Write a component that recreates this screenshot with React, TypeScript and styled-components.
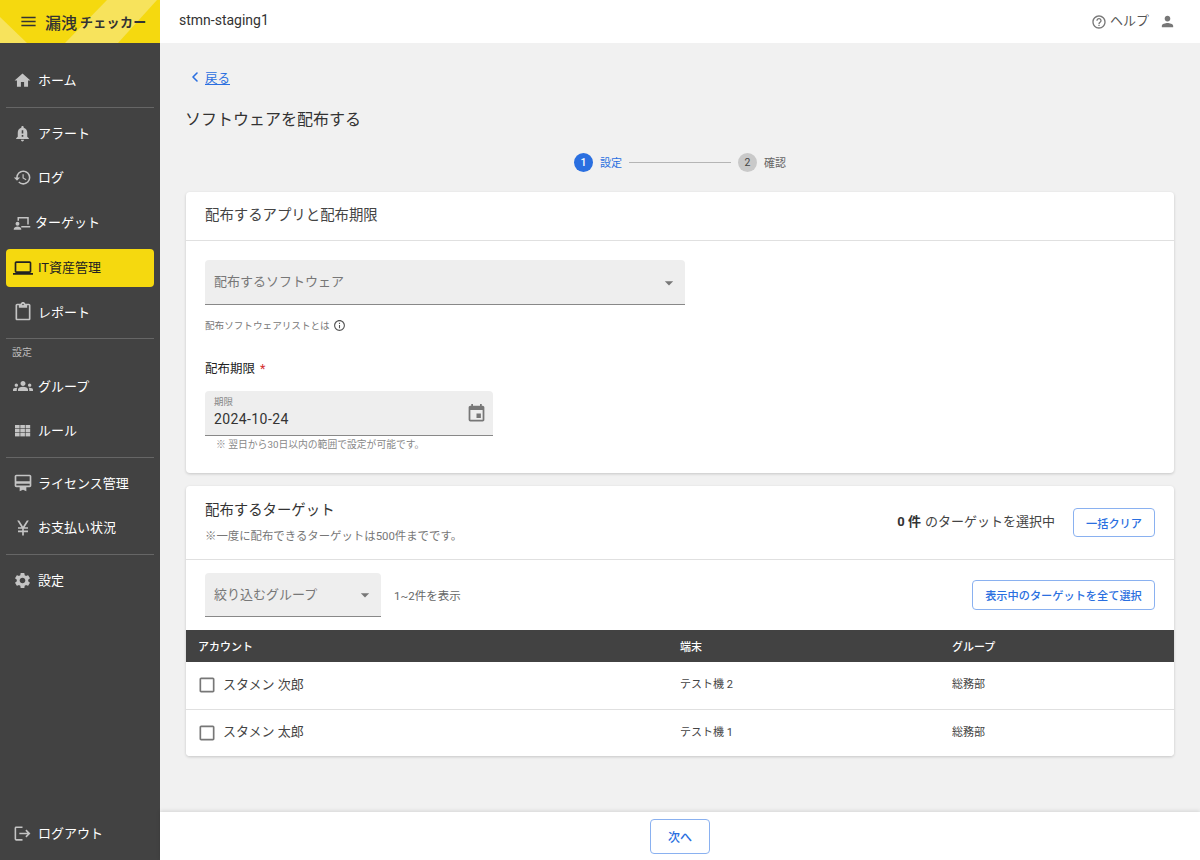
import React from "react";
import styled, { createGlobalStyle } from "styled-components";
import { ChevronLeft } from "lucide-react";
import {
  MdHome, MdNotificationImportant, MdRestore, MdLaptop, MdOutlineContentPaste, MdGroups,
  MdOutlineCardMembership, MdCurrencyYen, MdSettings, MdLogout, MdMenu, MdOutlineHelpOutline, MdPerson,
  MdArrowDropDown, MdOutlineInfo, MdEvent, MdCheckBoxOutlineBlank,
} from "react-icons/md";

const Global = createGlobalStyle`
  html, body { margin: 0; padding: 0; height: 100%; }
  body { font-family: Roboto, "Noto Sans CJK JP", sans-serif; color: #333; background: #f1f1f1; }
  * { box-sizing: border-box; }
`;

const Shell = styled.div`
  display: flex;
  width: 1200px;
  height: 860px;
  overflow: hidden;
`;
const Side = styled.aside`
  width: 160px;
  flex: none;
  display: flex;
  flex-direction: column;
  background: #424242;
`;
const Logo = styled.div`
  height: 43px;
  flex: none;
  display: flex;
  align-items: center;
  gap: 7px;
  padding-left: 19px;
  color: #333;
  background: #f5d90f;
  position: relative;
  overflow: hidden;
  & > * { position: relative; }
`;
const LogoArt = styled.svg`
  position: absolute !important;
  inset: 0;
  width: 160px;
  height: 43px;
`;
const LogoName = styled.span`
  display: flex;
  align-items: center;
  gap: 3px;
  font-weight: 700;
`;
const LogoKanji = styled.span`
  font-size: 16px;
  font-weight: 500;
`;
const LogoKana = styled.span`
  font-size: 13px;
  letter-spacing: 0.3px;
`;
const NavScroll = styled.nav`
  flex: 1;
  display: flex;
  flex-direction: column;
  padding: 15.5px 6px 4.5px;
`;
const Item = styled.div<{ $active?: boolean }>`
  height: 38px;
  margin: 3.4px 0;
  display: flex;
  align-items: center;
  gap: 6px;
  padding: 0 0 2px 7px;
  border-radius: 4px;
  font-size: 13px;
  color: ${(p) => (p.$active ? "#222" : "#fff")};
  background: ${(p) => (p.$active ? "#f5d90f" : "transparent")};
  svg { flex: none; color: ${(p) => (p.$active ? "#222" : "#c4c4c4")}; }
`;
const IconSlot = styled.span`
  width: 19px;
  flex: none;
  display: flex;
  justify-content: center;
  margin-top: 2px;
`;
const TargetSvg = styled.svg`
  margin: 2px -2px 0 0;
`;
const Divider = styled.hr`
  width: 100%;
  border: 0;
  border-top: 1px solid #666;
  margin: 3.5px 0 3px;
`;
const Section = styled.div`
  font-size: 10px;
  line-height: 12px;
  color: #bdbdbd;
  padding-left: 6px;
  margin-top: 5px;
  margin-bottom: 4.5px;
`;
const Spacer = styled.div`
  flex: 1;
`;
const Main = styled.div`
  flex: 1;
  min-width: 0;
  display: flex;
  flex-direction: column;
`;
const Top = styled.header`
  height: 43px;
  flex: none;
  background: #fff;
  display: flex;
  align-items: center;
  justify-content: space-between;
  padding: 0 24px 3px 19px;
  font-size: 14px;
`;
const Help = styled.div`
  display: flex;
  align-items: center;
  gap: 3px;
  color: #555;
  font-size: 13px;
  padding-bottom: 2px;
  svg { color: #777; margin-top: 5px; }
`;
const UserBtn = styled.span`
  display: flex;
  margin-left: 7px;
`;
const Content = styled.main`
  flex: 1;
  min-height: 0;
  padding: 25px 26px 0;
  display: flex;
  flex-direction: column;
`;
const Back = styled.a`
  display: flex;
  align-items: center;
  color: #2a6fe0;
  font-size: 12.5px;
  height: 18px;
  padding-left: 1px;
  span { text-decoration: underline; margin-left: 2px; }
`;
const Title = styled.h1`
  font-size: 16px;
  font-weight: 400;
  margin: 22px 0 0 -1px;
  line-height: 24px;
  color: #333;
`;
const Stepper = styled.div`
  display: flex;
  align-items: center;
  justify-content: center;
  height: 20px;
  margin: 20px 0 20px;
  font-size: 11px;
`;
const StepDot = styled.span<{ $on?: boolean }>`
  width: 19px;
  height: 19px;
  border-radius: 50%;
  display: flex;
  align-items: center;
  justify-content: center;
  font-size: 10.5px;
  font-weight: ${(p) => (p.$on ? 500 : 400)};
  background: ${(p) => (p.$on ? "#2a6fe0" : "#c9c9c9")};
  color: ${(p) => (p.$on ? "#fff" : "#444")};
`;
const StepLabel = styled.span<{ $on?: boolean }>`
  margin-left: 7px;
  color: ${(p) => (p.$on ? "#2a6fe0" : "#666")};
`;
const StepLine = styled.span`
  width: 102px;
  height: 1px;
  background: #b5b5b5;
  margin: 0 7px;
`;
const Card = styled.section`
  background: #fff;
  border-radius: 4px;
  box-shadow: 0 1px 3px rgba(0, 0, 0, 0.18);
  margin-bottom: 13px;
`;
const CardHead = styled.div`
  height: 49px;
  display: flex;
  align-items: center;
  padding: 0 19px 5px;
  font-size: 14.4px;
  color: #444;
  border-bottom: 1px solid #e0e0e0;
`;
const CardBody = styled.div`
  padding: 19px 19px 22px;
`;
const Filled = styled.div<{ $w: number; $h: number }>`
  width: ${(p) => p.$w}px;
  height: ${(p) => p.$h}px;
  background: #eee;
  border-bottom: 1px solid #888;
  border-radius: 4px 4px 0 0;
  display: flex;
  align-items: center;
  justify-content: space-between;
  padding: 0 6px 3px 9px;
  font-size: 13px;
  color: #777;
  svg { color: #777; flex: none; margin-top: 4px; }
`;
const Hint = styled.div`
  display: flex;
  align-items: center;
  gap: 3px;
  font-size: 9.6px;
  line-height: 12px;
  color: #777;
  margin-top: 14px;
  svg { color: #555; }
`;
const Label = styled.div`
  font-size: 12.5px;
  line-height: 16px;
  color: #222;
  margin-top: 29px;
  margin-bottom: 14px;
  b { font-weight: 400; color: #d32f2f; margin-left: 2px; }
`;
const DateText = styled.div`
  display: flex;
  flex-direction: column;
  small { font-size: 9.5px; color: #888; line-height: 12px; margin-bottom: 3px; }
  span { font-size: 14px; line-height: 16px; color: #333; letter-spacing: 0.4px; }
`;
const Note = styled.div`
  font-size: 9.8px;
  line-height: 12px;
  color: #888;
  margin: 3px 0 0 11px;
`;
const TargetHead = styled.div`
  height: 74px;
  display: flex;
  align-items: center;
  justify-content: space-between;
  padding: 0 19px 2px;
  border-bottom: 1px solid #e0e0e0;
`;
const TargetTitle = styled.div`
  font-size: 14.4px;
  line-height: 20px;
  color: #333;
`;
const TargetSub = styled.div`
  font-size: 11.4px;
  line-height: 14px;
  color: #777;
  margin-top: 8px;
`;
const Count = styled.div`
  display: flex;
  align-items: center;
  font-size: 13px;
  color: #444;
  gap: 18px;
  margin-top: 2px;
  b { font-weight: 700; color: #333; margin-right: 4px; }
  span { padding-bottom: 5px; }
`;
const OutlineBtn = styled.button<{ $w?: number; $h?: number; $fs?: number }>`
  width: ${(p) => p.$w ?? 82}px;
  height: ${(p) => p.$h ?? 29}px;
  background: #fff;
  border: 1px solid #8ab1f0;
  border-radius: 4px;
  color: #2a6fe0;
  font: 500 ${(p) => p.$fs ?? 11.2}px Roboto, "Noto Sans CJK JP", sans-serif;
  padding: 0;
`;
const Filter = styled.div`
  height: 70px;
  padding: 13px 19px 0;
  display: flex;
  align-items: flex-start;
`;
const Shown = styled.div`
  height: 44px;
  display: flex;
  align-items: center;
  margin-left: 13px;
  font-size: 11.5px;
  color: #666;
`;
const FilterRight = styled.div`
  margin-left: auto;
  margin-top: 7px;
`;
const Row = styled.div<{ $head?: boolean }>`
  display: grid;
  grid-template-columns: 482px 272px 1fr;
  align-items: center;
  padding: 0 0 ${(p) => (p.$head ? 0 : 5)}px 12px;
  height: ${(p) => (p.$head ? 32 : 48)}px;
  background: ${(p) => (p.$head ? "#424242" : "#fff")};
  color: ${(p) => (p.$head ? "#fff" : "#444")};
  font-size: 11px;
  font-weight: ${(p) => (p.$head ? 500 : 400)};
  border-bottom: ${(p) => (p.$head ? "0" : "1px solid #e0e0e0")};
  &:last-child { border-bottom: 0; border-radius: 0 0 4px 4px; height: 46px; }
`;
const Account = styled.div`
  display: flex;
  align-items: center;
  gap: 6px;
  font-size: 13px;
  color: #444;
  svg { color: #777; margin: 4px 0 0 -1px; }
`;
const Footer = styled.footer`
  height: 48px;
  flex: none;
  margin-top: auto;
  background: #fff;
  box-shadow: 0 -1px 4px rgba(0, 0, 0, 0.12);
  display: flex;
  align-items: center;
  justify-content: center;
  position: relative;
`;

const TargetIcon = () => (
  <TargetSvg width="18" height="18" viewBox="0 0 24 24" fill="currentColor">
    <path d="M6 4h15v10h-2V6H8v3H6z" />
    <path d="M11 16h12v2H11z" />
    <circle cx="6" cy="13" r="2.6" />
    <path d="M1 20c0-2.2 2.8-3.4 5-3.4s5 1.2 5 3.4v1H1z" />
  </TargetSvg>
);

const GridIcon = () => (
  <svg width="19" height="19" viewBox="0 0 19 19" fill="currentColor">
    {[2, 7.3, 12.6].map((x) =>
      [4, 8, 12].map((y) => <rect key={`${x}-${y}`} x={x} y={y} width="4.6" height="3.4" />)
    )}
  </svg>
);

const App = () => (
  <Shell>
    <Global />
    <Side>
      <Logo>
        <LogoArt viewBox="0 0 160 43">
          <polygon points="0,17 27,43 0,43" fill="#f7e35c" />
          <polygon points="107,0 157,0 118,43 65,43" fill="#f7e35c" />
        </LogoArt>
        <MdMenu size={19} color="#333" />
        <LogoName>
          <LogoKanji>漏洩</LogoKanji>
          <LogoKana>チェッカー</LogoKana>
        </LogoName>
      </Logo>
      <NavScroll>
        <Item><IconSlot><MdHome size={19} /></IconSlot>ホーム</Item>
        <Divider />
        <Item><IconSlot><MdNotificationImportant size={19} /></IconSlot>アラート</Item>
        <Item><IconSlot><MdRestore size={19} /></IconSlot>ログ</Item>
        <Item><TargetIcon />ターゲット</Item>
        <Item $active><IconSlot><MdLaptop size={20} /></IconSlot>IT資産管理</Item>
        <Item><IconSlot><MdOutlineContentPaste size={20} /></IconSlot>レポート</Item>
        <Divider />
        <Section>設定</Section>
        <Item><IconSlot><MdGroups size={20} /></IconSlot>グループ</Item>
        <Item><IconSlot><GridIcon /></IconSlot>ルール</Item>
        <Divider />
        <Item><IconSlot><MdOutlineCardMembership size={20} /></IconSlot>ライセンス管理</Item>
        <Item><IconSlot><MdCurrencyYen size={20} /></IconSlot>お支払い状況</Item>
        <Divider />
        <Item><IconSlot><MdSettings size={19} /></IconSlot>設定</Item>
        <Spacer />
        <Item><IconSlot><MdLogout size={19} /></IconSlot>ログアウト</Item>
      </NavScroll>
    </Side>
    <Main>
      <Top>
        <span>stmn-staging1</span>
        <Help>
          <MdOutlineHelpOutline size={16} />
          ヘルプ
          <UserBtn><MdPerson size={17} /></UserBtn>
        </Help>
      </Top>
      <Content>
        <Back><ChevronLeft size={16} strokeWidth={2.4} /><span>戻る</span></Back>
        <Title>ソフトウェアを配布する</Title>
        <Stepper>
          <StepDot $on>1</StepDot>
          <StepLabel $on>設定</StepLabel>
          <StepLine />
          <StepDot>2</StepDot>
          <StepLabel>確認</StepLabel>
        </Stepper>
        <Card>
          <CardHead>配布するアプリと配布期限</CardHead>
          <CardBody>
            <Filled $w={480} $h={45}>
              配布するソフトウェア
              <MdArrowDropDown size={20} />
            </Filled>
            <Hint>配布ソフトウェアリストとは <MdOutlineInfo size={13} /></Hint>
            <Label>配布期限 <b>*</b></Label>
            <Filled $w={288} $h={45}>
              <DateText>
                <small>期限</small>
                <span>2024-10-24</span>
              </DateText>
              <MdEvent size={21} />
            </Filled>
            <Note>※ 翌日から30日以内の範囲で設定が可能です。</Note>
          </CardBody>
        </Card>
        <Card>
          <TargetHead>
            <div>
              <TargetTitle>配布するターゲット</TargetTitle>
              <TargetSub>※一度に配布できるターゲットは500件までです。</TargetSub>
            </div>
            <Count>
              <span><b>0 件</b>のターゲットを選択中</span>
              <OutlineBtn>一括クリア</OutlineBtn>
            </Count>
          </TargetHead>
          <Filter>
            <Filled $w={176} $h={44}>
              絞り込むグループ
              <MdArrowDropDown size={20} />
            </Filled>
            <Shown>1~2件を表示</Shown>
            <FilterRight>
              <OutlineBtn $w={183} $h={30}>表示中のターゲットを全て選択</OutlineBtn>
            </FilterRight>
          </Filter>
          <Row $head><span>アカウント</span><span>端末</span><span>グループ</span></Row>
          <Row>
            <Account><MdCheckBoxOutlineBlank size={20} />スタメン 次郎</Account>
            <span>テスト機 2</span><span>総務部</span>
          </Row>
          <Row>
            <Account><MdCheckBoxOutlineBlank size={20} />スタメン 太郎</Account>
            <span>テスト機 1</span><span>総務部</span>
          </Row>
        </Card>
      </Content>
      <Footer>
        <OutlineBtn $w={60} $h={35} $fs={12}>次へ</OutlineBtn>
      </Footer>
    </Main>
  </Shell>
);

export default App;
